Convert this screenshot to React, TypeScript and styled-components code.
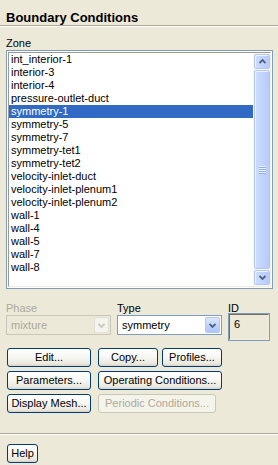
import React from 'react';
import styled, { createGlobalStyle, css } from 'styled-components';

const GlobalStyle = createGlobalStyle`
  html, body {
    margin:0;
    padding:0;
    background:#ece9d8;
  }
  body {
    font-family:"Liberation Sans", Arial, sans-serif;
    font-size:11px;
    color:#000;
  }
`;

const Panel = styled.div`
  width:278px;
  height:465px;
  display:flex;
  flex-direction:column;
  overflow:hidden;
`;

const Header = styled.div`
  height:26px;
  box-sizing:border-box;
  padding:11px 0 0 6px;
  border-bottom:1px solid #aca899;
  box-shadow:0 1px 0 #fff;
`;

const Title = styled.div`
  font-size:13px;
  font-weight:700;
  line-height:14px;
`;

const Body = styled.div`
  padding-left:6px;
  display:flex;
  flex-direction:column;
`;

const Label = styled.div<{ $disabled?: boolean }>`
  line-height:13px;
  color:${p => (p.$disabled ? '#aca899' : '#000')};
`;

const ZoneLabel = styled(Label)`
  margin-top:11px;
`;

const ListFrame = styled.div`
  width:267px;
  height:239px;
  box-sizing:border-box;
  border:1px solid #7f9db9;
  padding:1px;
  background:#fff;
`;

const ListInner = styled.div`
  height:100%;
  box-sizing:border-box;
  border:1px solid;
  border-color:#9d9b8f #f1efe2 #f1efe2 #9d9b8f;
  display:flex;
  background:#fff;
`;

const Items = styled.div`
  flex:1;
  display:flex;
  flex-direction:column;
`;

const Item = styled.div<{ $selected?: boolean }>`
  height:13px;
  line-height:13px;
  padding-left:2px;
  white-space:nowrap;
  ${p =>
    p.$selected &&
    css`
      background:#316ac5;
      color:#fff;
    `}
`;

const ScrollBar = styled.div`
  width:17px;
  display:flex;
  flex-direction:column;
  gap:1px;
  padding:1px 0 1px 1px;
  box-sizing:border-box;
  background:#f7f7f3;
`;

const blueFace = css`
  box-sizing:border-box;
  border:1px solid #b1c7f5;
  border-radius:2px;
  background:linear-gradient(90deg, #cfdcfd 0%, #c3d5fd 45%, #b5cbfa 100%);
  box-shadow:inset 1px 1px 0 #eef3ff;
`;

const ScrollButton = styled.div`
  ${blueFace};
  height:15px;
  display:flex;
  align-items:center;
  justify-content:center;
`;

const Thumb = styled.div`
  ${blueFace};
  flex:1;
  display:flex;
  align-items:center;
  justify-content:center;
`;

const Grip = styled.div`
  width:7px;
  height:8px;
  background:repeating-linear-gradient(180deg, #eef3ff 0 1px, #8caef3 1px 2px);
`;

const FieldRow = styled.div`
  margin-top:13px;
  display:flex;
  gap:6px;
  align-items:flex-start;
`;

const Field = styled.div<{ $w: number }>`
  width:${p => p.$w}px;
  display:flex;
  flex-direction:column;
`;

const Combo = styled.div<{ $disabled?: boolean }>`
  height:20px;
  box-sizing:border-box;
  border:1px solid ${p => (p.$disabled ? '#c9c7ba' : '#7f9db9')};
  background:${p => (p.$disabled ? '#ece9d8' : '#fff')};
  color:${p => (p.$disabled ? '#aca899' : '#000')};
  display:flex;
  align-items:center;
  padding:1px;
`;

const ComboText = styled.span`
  flex:1;
  padding-left:3px;
  line-height:13px;
`;

const ComboArrow = styled.div<{ $disabled?: boolean }>`
  width:15px;
  height:100%;
  box-sizing:border-box;
  border-radius:2px;
  display:flex;
  align-items:center;
  justify-content:center;
  ${p =>
    p.$disabled
      ? css`
          border:1px solid #e2e0d6;
          background:#f4f3ee;
        `
      : css`
          border:1px solid #b1c7f5;
          background:linear-gradient(180deg, #dbe5fe 0%, #c3d5fd 50%, #adc5fa 100%);
        `}
`;

const IdBox = styled.div`
  margin-top:-2px;
  height:28px;
  box-sizing:border-box;
  border:1px solid #7f9db9;
  display:flex;
`;

const IdInner = styled.div`
  flex:1;
  border:1px solid;
  border-color:#716f64 #f1efe2 #f1efe2 #716f64;
  padding:3px 0 0 4px;
  line-height:13px;
`;

const Buttons = styled.div`
  margin-top:7px;
  padding-left:1px;
  display:flex;
  flex-direction:column;
  gap:4px;
`;

const ButtonRow = styled.div`
  display:flex;
  gap:7px;
`;

const Group = styled.div`
  display:flex;
  gap:4px;
`;

const Button = styled.button<{ $w: number }>`
  width:${p => p.$w}px;
  height:19px;
  box-sizing:border-box;
  padding:0;
  font-family:"Liberation Sans", Arial, sans-serif;
  font-size:11px;
  line-height:13px;
  color:#000;
  border:1px solid #003c74;
  border-radius:3px;
  background:linear-gradient(180deg, #ffffff 0%, #f7f7f3 45%, #ebe9e0 85%, #d8d3c8 100%);
  white-space:nowrap;
  &:disabled {
    color:#aca899;
    border-color:#c9c7ba;
    background:#f5f4ea;
  }
`;

const Separator = styled.div`
  margin-top:20px;
  border-top:1px solid #aca899;
  border-bottom:1px solid #fff;
`;

const Footer = styled.div`
  padding:9px 0 0 7px;
`;

const Chevron = ({ up, color = '#4d6185' }: { up?: boolean; color?: string }) => (
  <svg width="7" height="5" viewBox="0 0 7 5">
    <polyline
      points={up ? '0.5,4 3.5,1 6.5,4' : '0.5,1 3.5,4 6.5,1'}
      fill="none"
      stroke={color}
      strokeWidth="1.8"
    />
  </svg>
);

const zones = [
  'int_interior-1',
  'interior-3',
  'interior-4',
  'pressure-outlet-duct',
  'symmetry-1',
  'symmetry-5',
  'symmetry-7',
  'symmetry-tet1',
  'symmetry-tet2',
  'velocity-inlet-duct',
  'velocity-inlet-plenum1',
  'velocity-inlet-plenum2',
  'wall-1',
  'wall-4',
  'wall-5',
  'wall-7',
  'wall-8',
];

const App = () => {
  return (
    <Panel>
      <GlobalStyle />
      <Header>
        <Title>Boundary Conditions</Title>
      </Header>
      <Body>
        <ZoneLabel>Zone</ZoneLabel>
        <ListFrame>
          <ListInner>
            <Items>
              {zones.map(z => (
                <Item key={z} $selected={z === 'symmetry-1'}>
                  {z}
                </Item>
              ))}
            </Items>
            <ScrollBar>
              <ScrollButton>
                <Chevron up />
              </ScrollButton>
              <Thumb>
                <Grip />
              </Thumb>
              <ScrollButton>
                <Chevron />
              </ScrollButton>
            </ScrollBar>
          </ListInner>
        </ListFrame>
        <FieldRow>
          <Field $w={105}>
            <Label $disabled>Phase</Label>
            <Combo $disabled>
              <ComboText>mixture</ComboText>
              <ComboArrow $disabled>
                <Chevron color="#c9c7ba" />
              </ComboArrow>
            </Combo>
          </Field>
          <Field $w={105}>
            <Label>Type</Label>
            <Combo>
              <ComboText>symmetry</ComboText>
              <ComboArrow>
                <Chevron />
              </ComboArrow>
            </Combo>
          </Field>
          <Field $w={42}>
            <Label>ID</Label>
            <IdBox>
              <IdInner>6</IdInner>
            </IdBox>
          </Field>
        </FieldRow>
        <Buttons>
          <ButtonRow>
            <Button $w={84}>Edit...</Button>
            <Group>
              <Button $w={60}>Copy...</Button>
              <Button $w={60}>Profiles...</Button>
            </Group>
          </ButtonRow>
          <ButtonRow>
            <Button $w={84}>Parameters...</Button>
            <Button $w={124}>Operating Conditions...</Button>
          </ButtonRow>
          <ButtonRow>
            <Button $w={84}>Display Mesh...</Button>
            <Button $w={118} disabled>
              Periodic Conditions...
            </Button>
          </ButtonRow>
        </Buttons>
      </Body>
      <Separator />
      <Footer>
        <Button $w={31}>Help</Button>
      </Footer>
    </Panel>
  );
};

export default App;
